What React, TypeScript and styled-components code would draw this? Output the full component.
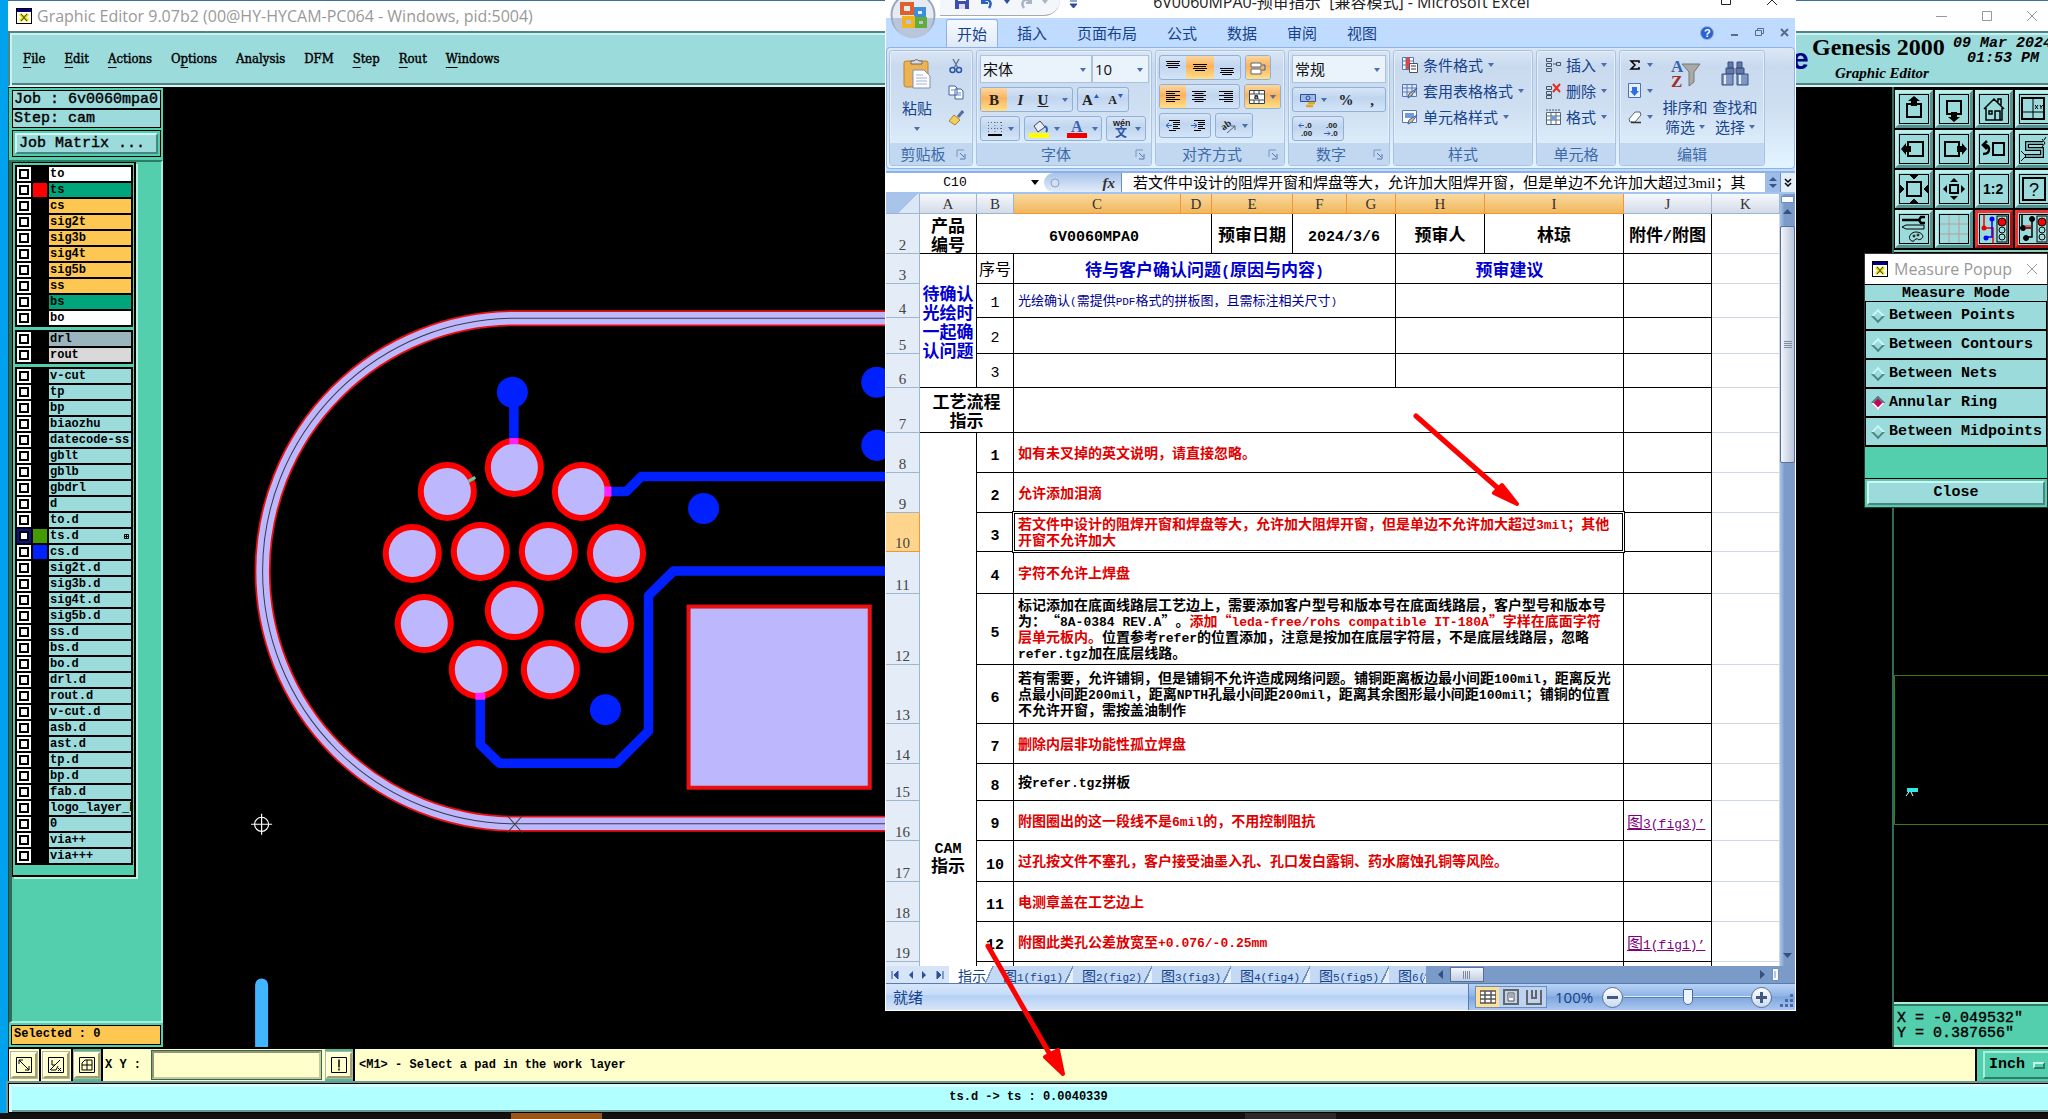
import React from "react";
import styled, { createGlobalStyle, css } from "styled-components";

const UI = `"Open Sans", "Noto Sans CJK SC", sans-serif`;
const MONO = `"Liberation Mono", "Noto Sans CJK SC", monospace`;
const SERIF = `"Liberation Serif", "Noto Sans CJK SC", serif`;
const CJK = `"Noto Sans CJK SC", sans-serif`;

const teal = "#9bdbdb";
const green = "#54cfae";
const cream = "#ffffcc";
const amber = "#fdc751";
const navy = "#15428b";

const Global = createGlobalStyle`
  *, *::before, *::after { box-sizing: border-box; }
  body { margin: 0; background: #00a2ed; overflow: hidden; }
  button, input, select { font: inherit; color: inherit; margin: 0; padding: 0; border: 0; background: none; border-radius: 0; }
  svg { display: block; flex: none; }
`;

const bevel = css`
  border: 2px solid;
  border-color: #d3f6f3 #4b8583 #4b8583 #d3f6f3;
`;

/* ---------- desktop and editor window ---------- */
const Desktop = styled.div`
  position: relative;
  min-height: 100vh;
  display: flex;
  flex-direction: column;
  overflow: hidden;
  background: #00a2ed;
  font-family: ${UI};
`;
const Editor = styled.section`
  flex: 1;
  margin-left: 8px;
  display: flex;
  flex-direction: column;
  background: #000;
  border-top: 1px solid #3a6ea0;
`;
const TitleBar = styled.header`
  height: 30px;
  display: flex;
  align-items: center;
  gap: 5px;
  padding: 0 10px 0 8px;
  background: #fff;
  color: #999;
  font-size: 16px;
  line-height: 20px;
`;
const WindowButtons = styled.div`
  margin-left: auto;
  display: flex;
  gap: 33px;
`;
const Plain = styled.button`
  display: flex;
  align-items: center;
  justify-content: center;
`;
const MenuBar = styled.nav`
  height: 56px;
  display: flex;
  background: ${teal};
  border: 2px solid;
  border-color: #4f8484 ${teal} #d3f6f3 #4f8484;
  border-right: 0;
  box-shadow: inset 2px 2px #c9f1f0, inset 0 -2px #4f7f80;
`;
const Menus = styled.div`
  display: flex;
  align-items: center;
  gap: 19px;
  padding: 0 0 0 13px;
`;
const MenuItem = styled.button`
  font: 13px/20px "DejaVu Serif Condensed", "DejaVu Serif", serif;
  -webkit-text-stroke: 0.4px #000;
  u { text-underline-offset: 4px; }
`;
const Brand = styled.div`
  margin-left: auto;
  display: grid;
  grid-template-columns: 20px 141px 95px;
  font-family: ${SERIF};
  font-weight: bold;
  white-space: nowrap;
`;
const BrandMark = styled.div`
  font: bold 30px/32px "Liberation Sans", sans-serif;
  color: #000080;
  padding-top: 10px;
`;
const BrandName = styled.div`
  font-size: 24px;
  line-height: 28px;
  small { display: block; font-size: 15px; line-height: 24px; font-style: italic; padding-left: 23px; }
`;
const Clock = styled.div`
  padding-top: 3px;
  font: italic bold 15px/15px ${MONO};
  span { display: block; padding-left: 14px; }
`;
const Work = styled.div`
  flex: 1;
  min-height: 0;
  display: flex;
`;

/* ---------- layer side bar ---------- */
const Side = styled.aside`
  width: 155px;
  display: flex;
  flex-direction: column;
  background: ${green};
  border-top: 1px solid #000;
  border-left: 1px solid #24483f;
  font-family: ${MONO};
`;
const JobInfo = styled.div`
  padding: 2px 2px 3px 3px;
  font-size: 15px;
  line-height: 17px;
  -webkit-text-stroke: 0.4px #000;
`;
const JobLine = styled.div`
  height: 19px;
  padding-left: 1px;
  border: 1px solid #000;
  background: ${teal};
  white-space: pre;
`;
const JobFrame = styled.div`
  margin-top: 2px;
  padding: 2px;
  border: 1px solid #000;
`;
const JobButton = styled.button`
  ${bevel}
  display: block;
  width: 100%;
  height: 21px;
  padding-left: 2px;
  text-align: left;
  background: ${teal};
  -webkit-text-stroke: 0.4px #000;
`;
const LayerPanel = styled.div`
  flex: 1;
  border-top: 2px solid #2f7c66;
  border-left: 3px solid #2f6b57;
  border-right: 2px solid #a9eedb;
  border-bottom: 2px solid #a9eedb;
`;
const LayerList = styled.div`
  width: 124px;
  height: 715px;
  display: flex;
  flex-direction: column;
  gap: 3px;
  padding: 2px;
  border: 1px solid #000;
  border-right-width: 2px;
  border-bottom-width: 2px;
  box-shadow: 2px 2px #b9f0e0;
`;
const LayerGroup = styled.div`
  display: grid;
  gap: 2px;
  width: 118px;
  padding: 2px;
  background: #000;
`;
const LayerRow = styled.label`
  height: 14px;
  display: grid;
  grid-template-columns: 14px 14px 82px;
  gap: 2px;
`;
const LayerTick = styled.input<{ $on?: boolean }>`
  appearance: none;
  width: 14px;
  height: 14px;
  padding: 2px;
  border: 2px solid ${(p) => (p.$on ? "#0a1090" : "#fff")};
  background: linear-gradient(#fff, #fff) content-box, #000;
`;
const Swatch = styled.span<{ $c: string }>`
  background: ${(p) => p.$c};
`;
const LayerName = styled.span<{ $c: string }>`
  display: flex;
  justify-content: space-between;
  align-items: center;
  padding: 0 2px 0 1px;
  background: ${(p) => p.$c};
  font-size: 12px;
  line-height: 14px;
  font-weight: bold;
  white-space: nowrap;
  overflow: hidden;
`;
const Selected = styled.div`
  margin: 2px;
  height: 20px;
  padding-left: 2px;
  border: 1px solid #000;
  background: ${amber};
  font-size: 12px;
  line-height: 17px;
  font-weight: bold;
`;
const Board = styled.main`
  flex: 1;
  min-width: 0;
  background: #000;
  overflow: hidden;
  svg { width: 100%; height: 100%; }
`;

/* ---------- right column ---------- */
const Right = styled.aside`
  width: 156px;
  display: flex;
  flex-direction: column;
  border-left: 2px solid #2f6b57;
  overflow: hidden;
`;
const ToolGrid = styled.div`
  display: grid;
  grid-template-columns: repeat(4, 38px);
  grid-auto-rows: 38px;
  gap: 2px;
  padding: 3px 0 2px 1px;
  border-bottom: 2px solid #8ecfc0;
`;
const Tool = styled.button<{ $alert?: boolean }>`
  display: flex;
  align-items: center;
  justify-content: center;
  border: 3px solid;
  border-color: ${(p) => (p.$alert ? "#e33 #a11 #a11 #e33" : "#bdeeec #56908f #56908f #bdeeec")};
  background: ${teal};
`;
const Overview = styled.div`
  flex: 1;
  min-height: 0;
  overflow: hidden;
`;
const Coords = styled.div`
  height: 45px;
  padding: 7px 0 0 3px;
  border: 2px solid;
  border-width: 2px 0;
  border-color: #a9eedb;
  box-shadow: inset 0 2px #2f7c66;
  background: ${green};
  font: 15px/15px ${MONO};
  -webkit-text-stroke: 0.4px #000;
  white-space: pre;
`;

/* ---------- prompt and status bars ---------- */
const Prompt = styled.div`
  height: 36px;
  display: flex;
  border: solid #000;
  border-width: 2px 0 2px 1px;
  background: ${cream};
  font: bold 12px/18px ${MONO};
`;
const PromptBox = styled.div<{ $green?: boolean }>`
  width: ${(p) => (p.$green ? 30 : 32)}px;
  display: flex;
  align-items: center;
  justify-content: center;
  background: ${(p) => (p.$green ? "#4dba9c" : cream)};
  border-right: 2px solid #000;
`;
const PromptButton = styled.button`
  width: 26px;
  height: 26px;
  display: flex;
  align-items: center;
  justify-content: center;
  background: ${cream};
  border: 2px solid;
  border-color: #fffff0 #a09c78 #a09c78 #fffff0;
  outline: 1px solid #b8b48c;
`;
const PromptLabel = styled.label`
  display: flex;
  align-items: center;
  padding: 0 9px 0 2px;
`;
const PromptField = styled.input`
  width: 169px;
  margin: 2px 4px 2px 2px;
  padding: 0 4px;
  border: 2px solid;
  border-color: #98946f #cbc79c #cbc79c #98946f;
  outline: 1px solid #30685a;
  background: ${cream};
`;
const PromptText = styled.div`
  flex: 1;
  display: flex;
  align-items: center;
  padding-left: 4px;
`;
const UnitBox = styled.div`
  width: 73px;
  padding: 2px 0 2px 6px;
  border-left: 2px solid #000;
  background: ${green};
  overflow: hidden;
`;
const UnitButton = styled.div`
  width: 90px;
  height: 28px;
  display: flex;
  align-items: center;
  gap: 6px;
  border: 2px solid;
  border-color: #a9eedb #2f7c66 #2f7c66 #a9eedb;
  padding-left: 4px;
  select { appearance: none; width: 38px; font: bold 15px/20px ${MONO}; }
`;
const UnitKnob = styled.span`
  width: 12px;
  height: 7px;
  border: 2px solid;
  border-color: #c4f5e8 #2f7c66 #2f7c66 #c4f5e8;
`;
const Status = styled.footer`
  height: 30px;
  display: flex;
  align-items: center;
  justify-content: center;
  padding-bottom: 2px;
  border: solid #000;
  border-width: 1px 0 1px 1px;
  outline: 2px solid #6b9999;
  background: #b2ffff;
  box-shadow: inset 3px 3px #d5ffff, inset 0 -2px #6b9999;
  font: bold 12px/18px ${MONO};
`;
const Taskbar = styled.div`
  height: 7px;
  display: flex;
  justify-content: flex-end;
  padding-right: 74px;
  background: linear-gradient(90deg, transparent 511px, #9c5517 511px, #9c5517 602px, transparent 602px, transparent 1245px, #2a2a2a 1245px, #2a2a2a 1336px, transparent 1336px), #111;
  color: #fff;
  font-size: 12px;
  line-height: 24px;
  overflow: hidden;
`;

/* ---------- measure popup ---------- */
const Popup = styled.section`
  position: absolute;
  right: 0;
  top: 253px;
  width: 184px;
  border: 1px solid #333;
  background: ${green};
  font: bold 15px/18px ${MONO};
`;
const PopupTitle = styled.header`
  height: 30px;
  display: flex;
  align-items: center;
  gap: 6px;
  padding: 0 9px 0 7px;
  background: #fff;
  color: #999;
  font: 16px/20px ${UI};
  button { margin-left: auto; }
`;
const Mode = styled.h2`
  height: 18px;
  margin: 0;
  border: solid #000;
  border-width: 1px 0;
  background: ${teal};
  font: inherit;
  line-height: 17px;
  text-align: center;
`;
const ModeList = styled.div`
  display: grid;
  gap: 2px;
  padding: 0 1px 2px 1px;
  background: #000;
`;
const ModeRow = styled.label`
  height: 27px;
  display: flex;
  align-items: center;
  gap: 6px;
  padding-left: 7px;
  background: ${teal};
  white-space: nowrap;
  input {
    appearance: none;
    width: 10px;
    height: 10px;
    transform: rotate(45deg);
    border: 2px solid;
    border-color: #c9f6f6 #4f8484 #4f8484 #c9f6f6;
  }
  input:checked { background: #cc0055; border-color: #4f8484 #e9ffff #e9ffff #4f8484; }
`;
const CloseFrame = styled.div`
  margin-top: 31px;
  padding: 2px;
  border: solid #000;
  border-width: 1px 0 0;
  button { ${bevel} width: 100%; height: 24px; background: ${teal}; }
`;

/* ---------- spreadsheet window ---------- */
const Sheet = styled.section`
  position: absolute;
  left: 885px;
  top: -14px;
  width: 911px;
  border: solid #fff;
  border-width: 0 1px 1px 1px;
  background: #bfdbff;
  color: ${navy};
  font-size: 15px;
  line-height: 20px;
`;
const SheetTitle = styled.header`
  height: 32px;
  display: flex;
  align-items: center;
  background: #fff;
  color: #222;
  white-space: nowrap;
`;
const Quick = styled.div`
  width: 120px;
  height: 30px;
  align-self: flex-start;
  margin-left: 54px;
  padding: 2px 16px 0 14px;
  display: flex;
  align-items: center;
  gap: 8px;
  background: #f3f6fb;
  border-bottom: 1px solid #aaa;
  border-radius: 0 0 16px 0;
`;
const SheetName = styled.h1`
  flex: 1;
  margin: 0;
  font: inherit;
  font-size: 16px;
  text-align: center;
  padding: 0 76px 0 0;
`;
const SheetButtons = styled.div`
  display: flex;
  gap: 36px;
  padding: 0 18px 4px 0;
`;
const Orb = styled.button`
  position: absolute;
  left: 4px;
  top: 6px;
`;
const Tabs = styled.nav`
  height: 29px;
  display: flex;
  align-items: flex-end;
  gap: 8px;
  padding: 0 6px 0 60px;
`;
const Tab = styled.button<{ $on?: boolean }>`
  height: 28px;
  padding: 0 11px;
  ${(p) => p.$on && css`
    background: linear-gradient(#f6faff, #dfeaf8);
    border: 1px solid #8db2e3;
    border-bottom: 0;
    padding: 0 10px;
    border-radius: 3px 3px 0 0;
  `}
`;
const TabTools = styled.div`
  margin-left: auto;
  align-self: center;
  display: flex;
  align-items: center;
  gap: 16px;
`;
const Ribbon = styled.div`
  height: 122px;
  display: flex;
  gap: 3px;
  padding: 2px 2px 2px 2px;
  border: 1px solid #8db2e3;
  border-radius: 4px;
  background: linear-gradient(#dde8f5 0, #c9daef 18px, #cfdff2 60px, #e3f4ff 118px);
`;
const Group = styled.section<{ $w: number }>`
  width: ${(p) => p.$w}px;
  height: 116px;
  display: flex;
  flex-direction: column;
  justify-content: space-between;
  border: 1px solid #a9c3e3;
  border-radius: 3px;
  box-shadow: inset 0 0 0 1px #e4effb;
  overflow: hidden;
`;
const GroupBody = styled.div`
  display: flex;
  flex-direction: column;
  gap: 4px;
  padding: 4px 3px 0;
`;
const GroupName = styled.div`
  height: 22px;
  display: flex;
  align-items: center;
  background: #c1d8f0;
  color: #3e6aaa;
  span { flex: 1; text-align: center; }
  svg { margin-right: 5px; }
`;
const Line = styled.div`
  display: flex;
  gap: 4px;
`;
const Cluster = styled.div`
  height: 25px;
  display: flex;
  border: 1px solid #8fb0d8;
  border-radius: 3px;
  background: linear-gradient(#d7e5f6, #c0d5ef 45%, #d5e5f8);
  overflow: hidden;
`;
const Cell = styled.button<{ $w?: number; $on?: boolean; $small?: boolean }>`
  width: ${(p) => p.$w ?? 26}px;
  display: flex;
  align-items: center;
  justify-content: center;
  gap: ${(p) => (p.$w === 25 ? 1 : 5)}px;
  font: bold ${(p) => (p.$small ? 12 : 15)}px/20px ${SERIF};
  color: #222;
  ${(p) => p.$on && css`background: linear-gradient(#fcd7a0, #fbb25c 45%, #ffe08a);`}
`;
const Combo = styled.div<{ $w: number }>`
  position: relative;
  width: ${(p) => p.$w}px;
  height: 28px;
  margin-right: -4px;
  border: 1px solid #abc1de;
  background: #eaf2fb;
  select { appearance: none; width: 100%; height: 26px; padding-left: 2px; color: #111; line-height: 20px; }
  svg { position: absolute; right: 5px; top: 12px; }
`;
const ClipBody = styled.div`
  display: grid;
  grid-template-columns: 54px 1fr;
  padding: 7px 4px 0 0;
`;
const BigButton = styled.button`
  display: flex;
  flex-direction: column;
  align-items: center;
  gap: 9px;
`;
const IconColumn = styled.div<{ $gap: number }>`
  display: flex;
  flex-direction: column;
  align-items: center;
  gap: ${(p) => p.$gap}px;
`;
const ListButton = styled.button`
  display: flex;
  align-items: center;
  gap: 5px;
  height: 22px;
  white-space: nowrap;
`;
const ListColumn = styled.div`
  display: flex;
  flex-direction: column;
  align-items: flex-start;
  gap: 4px;
  padding: 3px 0 0 8px;
`;
const EditBody = styled.div`
  display: grid;
  grid-template-columns: 40px 50px 50px;
`;
const EditButton = styled.button`
  display: flex;
  flex-direction: column;
  align-items: center;
  padding-top: 7px;
  span { display: flex; align-items: center; gap: 4px; white-space: nowrap; }
  svg + span { margin-top: 7px; }
`;

const FormulaBar = styled.div`
  height: 23px;
  display: flex;
  margin-top: 2px;
  border-top: 2px solid #8db2e3;
  border-bottom: 2px solid #a3c4ee;
  background: #fff;
  color: #000;
  font: 15px/19px ${CJK};
`;
const NameBox = styled.div`
  width: 158px;
  display: flex;
  align-items: center;
  input { width: 138px; text-align: center; font: 13px/18px ${MONO}; }
`;
const FxBox = styled.div`
  width: 78px;
  display: flex;
  align-items: center;
  justify-content: space-between;
  padding: 0 6px;
  border-right: 1px solid #6d8fc0;
  border-radius: 10px 0 0 10px;
  background: linear-gradient(#a9c4ea, #e2edfb);
  font: italic bold 15px/18px ${SERIF};
  color: #333;
`;
const Formula = styled.input`
  flex: 1;
  min-width: 0;
  padding-left: 11px;
  font: 15px/18px "Liberation Serif", "Noto Sans CJK SC", serif;
`;
const Spin = styled.div`
  width: 15px;
  display: flex;
  flex-direction: column;
  align-items: center;
  justify-content: center;
  gap: 3px;
  background: #9ebce8;
`;
const Expand = styled.button`
  width: 15px;
  display: flex;
  align-items: center;
  justify-content: center;
  background: #e4eefb;
  border-left: 1px solid #6d8fc0;
`;
const GridArea = styled.div`
  display: flex;
  height: 772px;
`;
const GridClip = styled.div`
  width: 894px;
  overflow: hidden;
  background: #fff;
`;
const Table = styled.table`
  width: 894px;
  table-layout: fixed;
  border-collapse: separate;
  border-spacing: 0;
  color: #000;
  text-spacing-trim: space-all;
  td, th { padding: 0; }
`;
const ColHead = styled.th<{ $on?: boolean }>`
  height: 20px;
  font: 15px/18px ${SERIF};
  color: #333;
  border-right: 1px solid ${(p) => (p.$on ? "#f29536" : "#9eb6ce")};
  border-bottom: 1px solid ${(p) => (p.$on ? "#f29536" : "#9eb6ce")};
  background: ${(p) => (p.$on ? "linear-gradient(#f9d99f, #f1b75b)" : "linear-gradient(#f6f9fc, #d3dbe9)")};
`;
const Corner = styled.th`
  background: linear-gradient(135deg, #a9c4e9 60%, #d9e7f7 60%);
  border-right: 1px solid #9eb6ce;
  border-bottom: 1px solid #9eb6ce;
`;
const RowHead = styled.th<{ $on?: boolean }>`
  vertical-align: bottom;
  font: 15px/16px ${SERIF};
  color: #444;
  background: ${(p) => (p.$on ? "#ffd58d" : "#e4ecf7")};
  border-right: 1px solid ${(p) => (p.$on ? "#f29536" : "#9eb6ce")};
  border-bottom: 1px solid ${(p) => (p.$on ? "#f29536" : "#9eb6ce")};
`;
type TdProps = { $kind?: "text" | "note" | "none"; $c?: string; $thin?: boolean; $picked?: boolean; $low?: boolean };
const Td = styled.td<TdProps>`
  color: ${(p) => p.$c ?? "#000"};
  border-right: 1px solid #000;
  border-bottom: 1px solid #000;
  text-align: center;
  font: bold 17px/19px ${CJK};
  ${(p) => p.$kind === "text" && css`padding: 0 0 2px 4px !important; text-align: left; font-size: 14px; line-height: 16px; white-space: nowrap;`}
  ${(p) => p.$kind === "note" && css`padding: 0 0 2px 4px !important; text-align: left; font-size: 13px; line-height: 16px;`}
  ${(p) => p.$kind === "none" && css`border-right-color: #d0d7e5; border-bottom-color: #d0d7e5;`}
  ${(p) => p.$thin && css`font-weight: normal; font-size: ${p.$kind === "note" ? 13 : 16}px;`}
  ${(p) => p.$low && css`vertical-align: bottom; padding-bottom: 92px !important;`}
  ${(p) => p.$picked && css`
    position: relative;
    &::after {
      content: "";
      position: absolute;
      inset: -2px;
      border: 1px solid #000;
      box-shadow: inset 0 0 0 1px #fff, inset 0 0 0 2px #000;
    }
  `}
`;
const Latin = styled.span<{ $s: number }>`
  font-family: ${MONO};
  font-size: ${(p) => p.$s}px;
  line-height: 0;
`;
const Red = styled.span`
  color: #e00000;
`;
const FigLink = styled.a`
  display: block;
  color: #800080;
  font: 16px/20px ${CJK};
  text-align: left;
  padding-left: 3px;
  text-decoration: underline;
  white-space: nowrap;
`;
const VScroll = styled.div`
  width: 15px;
  display: flex;
  flex-direction: column;
  align-items: center;
  background: linear-gradient(90deg, #a8c4ea, #7b9bc8 30%);
`;
const SplitMark = styled.div`
  width: 13px;
  height: 7px;
  margin: 2px 0 6px;
  border: 1px solid #6d8fc0;
  background: #fff;
`;
const VThumb = styled.div`
  width: 15px;
  height: 237px;
  margin: 12px 0 auto;
  display: flex;
  align-items: center;
  justify-content: center;
  border: 1px solid #5b6f96;
  border-radius: 2px;
  background: linear-gradient(90deg, #f3f6fb, #d3dcea 50%, #b9c6da);
`;
const TabStrip = styled.div`
  height: 17px;
  display: flex;
  background: #7a9ac8;
  font: 14px/16px ${CJK};
`;
const Nav = styled.div`
  width: 63px;
  display: flex;
  align-items: center;
  justify-content: space-around;
  background: #d5e4f7;
`;
const SheetTab = styled.button<{ $on?: boolean; $w: number }>`
  width: ${(p) => p.$w}px;
  text-align: left;
  padding-left: 9px;
  white-space: nowrap;
  overflow: hidden;
  background: ${(p) =>
    p.$on
      ? "linear-gradient(115deg, #fff 82%, #7e9cc8 82%, #7e9cc8 85%, #c4d9f3 85%)"
      : "linear-gradient(115deg, #c4d9f3 90%, #6f8fbf 90%, #6f8fbf 92%, #e6effa 92%)"};
`;
const HScroll = styled.div`
  flex: 1;
  display: flex;
  align-items: center;
  padding: 0 16px 0 12px;
  gap: 7px;
`;
const HThumb = styled.div`
  width: 34px;
  height: 15px;
  margin-right: auto;
  display: flex;
  align-items: center;
  justify-content: center;
  border: 1px solid #5b6f96;
  background: linear-gradient(#f3f6fb, #c3cfe2);
`;
const SheetStatus = styled.div`
  height: 27px;
  display: flex;
  align-items: center;
  border-top: 1px solid #567db0;
  background: linear-gradient(#d7e6f9, #c7dcf8 40%, #b3d0f5 45%, #d7e5f7);
`;
const Ready = styled.div`
  flex: 1;
  padding-left: 7px;
`;
const ZoomBox = styled.div`
  width: 327px;
  height: 26px;
  display: flex;
  align-items: center;
  padding: 0 1px 0 6px;
  border-left: 1px solid #567db0;
  background: linear-gradient(#b9d3f5, #8fb4e6 45%, #7fa6de 50%, #a9c7f0);
  label { display: flex; align-items: center; gap: 9px; padding-left: 8px; }
`;
const Views = styled.div`
  display: flex;
  width: 72px;
  border: 1px solid #6d8fc0;
`;
const View = styled.button<{ $on?: boolean }>`
  flex: 1;
  height: 20px;
  display: flex;
  align-items: center;
  justify-content: center;
  background: ${(p) => (p.$on ? "#ffdf94" : "#bcd3f2")};
`;
const Zoom = styled.input`
  appearance: none;
  width: 127px;
  height: 20px;
  background: linear-gradient(transparent 9px, #dfeaf8 9px, #dfeaf8 10px, #5a7fb5 10px, #5a7fb5 11px, transparent 11px);
  &::-webkit-slider-thumb {
    appearance: none;
    width: 10px;
    height: 16px;
    border: 1px solid #4b6a9b;
    border-radius: 1px 1px 5px 5px;
    background: #eef4fc;
  }
`;
const Round = styled.button`
  width: 21px;
  height: 21px;
  display: flex;
  align-items: center;
  justify-content: center;
  margin-right: -8px;
  border: 1px solid #5a7396;
  border-radius: 50%;
  background: linear-gradient(#fff, #c9daf2);
`;
const Grip = styled.span`
  margin: 8px 0 0 auto;
`;
const Arrows = styled.svg`
  position: absolute;
  left: 0;
  top: 0;
  pointer-events: none;
`;

/* ---------- small drawings ---------- */
const Ico = ({ w = 16, h = 16, children }: { w?: number; h?: number; children: React.ReactNode }) => (
  <svg width={w} height={h} viewBox={`0 0 ${w} ${h}`} fill="none" aria-hidden="true">{children}</svg>
);
const Down = ({ c = "#4b6fa8" }: { c?: string }) => <Ico w={6} h={4}><path d="M0 0h6L3 4z" fill={c} /></Ico>;
const XLogo = () => (
  <Ico w={16} h={16}>
    <rect x=".5" y=".5" width="15" height="15" fill="#fff" stroke="#000" />
    <rect x="1" y="1" width="14" height="3" fill="#000080" />
    <path d="M4 6l8 7M12 6l-8 7" stroke="#e6e600" strokeWidth="3" />
    <path d="M5 6l6 7M11 6l-6 7" stroke="#333" />
  </Ico>
);
const Launcher = () => (
  <Ico w={11} h={11}><path d="M1 8V1h7" stroke="#7a96c0" /><path d="M4 4l4 4M9 5v5H4" stroke="#5576ab" /></Ico>
);
const lines = (xs: number[][]) => <path d={xs.map(([x, y, l]) => `M${x} ${y}h${l}`).join("")} stroke="#000" strokeWidth="1" />;
const AlignV = ({ y }: { y: number }) => <Ico>{lines([[1, y + 0.5, 14], [2, y + 2.5, 12], [1, y + 4.5, 14], [3, y + 6.5, 10]])}</Ico>;
const AlignH = ({ k }: { k: number }) => (
  <Ico>{lines([0, 1, 2, 3, 4, 5].map((i) => { const l = i % 2 ? 9 : 14; return [1 + ((14 - l) * k) / 2, 2.5 + i * 2, l]; }))}</Ico>
);
const Indent = ({ out }: { out?: boolean }) => (
  <Ico>
    {lines([[4, 2.5, 11], [8, 4.5, 7], [8, 6.5, 7], [8, 8.5, 5], [8, 10.5, 7], [4, 12.5, 7]])}
    <path d={out ? "M7 7.500H1M4 5L1 7.500l3 2.500" : "M1 7.500h6M4 5l3 2.500-3 2.500"} stroke="#2b5fc0" />
  </Ico>
);

const toolDrawings: React.ReactNode[] = [
  <g key="0"><path d="M8 10h14v13H8z" strokeWidth="2" /><path d="M15 2l6 5h-3v5h-6V7H9z" fill="#000" stroke="none" /></g>,
  <g key="1"><path d="M8 7h14v13H8z" strokeWidth="2" /><path d="M15 28l6-5h-3v-5h-6v5H9z" fill="#000" stroke="none" /></g>,
  <g key="2"><path d="M5 15L15 5l10 10M7 14v12h16V14M16 26v-9h5v9M10 17h3v3h-3zM19 8V5h3v6" strokeWidth="1.500" /></g>,
  <g key="3"><path d="M3 4h22v21H3z" strokeWidth="2" /><path d="M14 4v21M3 18h22M16 11l3 4M19 11l-3 4M21 11l1 2 2-2M22 13v2" /></g>,
  <g key="4"><path d="M9 8h15v14H9z" strokeWidth="2" /><path d="M2 15l5-6v3h5v6H7v3z" fill="#000" stroke="none" /></g>,
  <g key="5"><path d="M6 8h14v14H6z" strokeWidth="2" /><path d="M28 15l-5-6v3h-5v6h5v3z" fill="#000" stroke="none" /></g>,
  <g key="6"><path d="M14 9h11v12H14z" strokeWidth="2" /><path d="M4 20c5 0 6-2 6-5s-2-4-5-4M8 7l-4 4 4 4" strokeWidth="2.500" /></g>,
  <g key="7"><path d="M24 9H8v6h15v7H6" strokeWidth="4" /><path d="M24 9H8v6h15v7H6" stroke={teal} strokeWidth="1.500" /><path d="M23 5l3 4-3 4M27 3l-2 3M2 17l5 5-5 5" /></g>,
  <g key="8"><path d="M8 8h14v14H8z" strokeWidth="2" /><path d="M15 5l-4-4h8zM15 25l-4 4h8zM5 15l-4-4v8zM25 15l4-4v8z" fill="#000" /></g>,
  <g key="9"><path d="M11 11h8v8h-8z" strokeWidth="2" /><path d="M15 4l-4 4h8zM15 26l-4-4h8zM4 15l4-4v8zM26 15l-4-4v8z" fill="#000" stroke="none" /></g>,
  <text key="10" x="4" y="20" fontSize="14" fontWeight="bold" fill="#000" stroke="none" fontFamily="Liberation Sans">1:2</text>,
  <g key="11"><path d="M4 4h22v22H4z" strokeWidth="2" /><text x="10" y="22" fontSize="18" fill="#000" stroke="none" fontFamily="Liberation Sans">?</text></g>,
  <g key="12"><path d="M3 6h17M26 3h-4l-2 3 2 3h4" strokeWidth="2.500" /><path d="M3 13l4-2h18v4H7z" /><path d="M13 27c-5-2-2-9 4-9s9 5 5 7-2-1-5 0-1 3-4 2z" /><circle cx="15" cy="22" r="1" /><circle cx="19" cy="21" r="1" /></g>,
  <path key="13" d="M10 1v28M20 1v28M1 10h28M1 20h28" stroke="#c09a9a" />,
  <g key="14"><path d="M5 1v13h9v15" stroke="#e00" strokeWidth="1.500" /><path d="M13 5v18H7" stroke="#00f" strokeWidth="1.500" /><circle cx="13" cy="5" r="2.500" fill="#00f" stroke="none" /><circle cx="7" cy="24" r="2.500" fill="#00f" stroke="none" /><circle cx="5" cy="14" r="2.500" fill="#e00" stroke="none" /><rect x="18" y="2" width="10" height="26" /><circle cx="23" cy="8" r="4" fill="#f00" /><circle cx="23" cy="16" r="3" /><circle cx="23" cy="23" r="3" /></g>,
  <g key="15"><path d="M3 1v13h9M13 5v18H7" strokeWidth="1.500" /><circle cx="13" cy="5" r="2.500" fill="#000" /><circle cx="7" cy="24" r="2.500" fill="#000" /><circle cx="4" cy="14" r="2.500" fill="#000" /><path d="M7 11v4M9 11v4M11 11v4" stroke="#e00" /><rect x="18" y="2" width="10" height="26" /><circle cx="23" cy="8" r="4" fill="#f00" /><circle cx="23" cy="16" r="3" /><circle cx="23" cy="23" r="3" /></g>,
];

/* ---------- data ---------- */
const stack: [string, string, string?][] = [
  ["to", "#fff"], ["ts", "#00a57c", "#f00"], ["cs", amber], ["sig2t", amber], ["sig3b", amber],
  ["sig4t", amber], ["sig5b", amber], ["ss", amber], ["bs", "#00a57c"], ["bo", "#fff"],
];
const drills: [string, string, string?][] = [["drl", "#9bb5bf"], ["rout", "#d9d9d9"]];
const misc: [string, string, string?][] = (
  "v-cut tp bp biaozhu datecode-ss gblt gblb gbdrl d to.d ts.d cs.d sig2t.d sig3b.d sig4t.d sig5b.d ss.d bs.d bo.d drl.d rout.d v-cut.d asb.d ast.d tp.d bp.d fab.d logo_layer_b 0 via++ via+++"
).split(" ").map((n) => [n, teal, n === "ts.d" ? "#439a05" : n === "cs.d" ? "#0022ff" : undefined]);

const menus: [string, string, string][] = [
  ["", "F", "ile"], ["", "E", "dit"], ["", "A", "ctions"], ["O", "p", "tions"], ["Analysis", "", ""],
  ["DFM", "", ""], ["", "S", "tep"], ["", "R", "out"], ["", "W", "indows"],
];
const pads = [
  [514, 467], [447, 491], [581, 491], [412, 553], [480, 551], [548, 551],
  [616, 553], [424, 623], [514, 610], [604, 623], [478, 669], [550, 669],
];
const vias = [[512, 392], [703, 508], [605, 709], [876, 382], [876, 445]];
const modes = ["Between Points", "Between Contours", "Between Nets", "Annular Ring", "Between Midpoints"];
const columns: [string, number][] = [
  ["A", 57], ["B", 37], ["C", 167], ["D", 31], ["E", 81], ["F", 54], ["G", 49], ["H", 89], ["I", 139], ["J", 88], ["K", 68],
];

const Mixed = ({ text, s }: { text: string; s: number }) => (
  <>{text.split(/([\x20-\x7e’]+)/).map((t, i) => (i % 2 ? <Latin $s={s} key={i}>{t}</Latin> : t))}</>
);
const M = ({ t }: { t: string }) => <Mixed text={t} s={13} />;

type Note = { row: number; h: number; red?: boolean; body: React.ReactNode; fig?: string };
const notes: Note[] = [
  { row: 8, h: 40, red: true, body: "如有未叉掉的英文说明，请直接忽略。" },
  { row: 9, h: 40, red: true, body: "允许添加泪滴" },
  { row: 10, h: 39, red: true, body: <><M t="若文件中设计的阻焊开窗和焊盘等大，允许加大阻焊开窗，但是单边不允许加大超过3mil；其他" /><br />开窗不允许加大</> },
  { row: 11, h: 42, red: true, body: "字符不允许上焊盘" },
  {
    row: 12, h: 71, body: <>
      标记添加在底面线路层工艺边上，需要添加客户型号和版本号在底面线路层，客户型号和版本号<br />
      <M t="为：“8A-0384 REV.A”。" /><Red><M t="添加“leda-free/rohs compatible IT-180A”字样在底面字符" /><br />层单元板内。</Red>
      <M t="位置参考refer的位置添加，注意是按加在底层字符层，不是底层线路层，忽略" /><br />
      <M t="refer.tgz加在底层线路。" />
    </>,
  },
  {
    row: 13, h: 59, body: <>
      <M t="若有需要，允许铺铜，但是铺铜不允许造成网络问题。铺铜距离板边最小间距100mil，距离反光" /><br />
      <M t="点最小间距200mil，距离NPTH孔最小间距200mil，距离其余图形最小间距100mil；铺铜的位置" /><br />
      不允许开窗，需按盖油制作
    </>,
  },
  { row: 14, h: 40, red: true, body: "删除内层非功能性孤立焊盘" },
  { row: 15, h: 37, body: <M t="按refer.tgz拼板" /> },
  { row: 16, h: 40, red: true, body: <M t="附图圈出的这一段线不是6mil的，不用控制阻抗" />, fig: "图3(fig3)’" },
  { row: 17, h: 41, red: true, body: "过孔按文件不塞孔，客户接受油墨入孔、孔口发白露铜、药水腐蚀孔铜等风险。" },
  { row: 18, h: 40, red: true, body: "电测章盖在工艺边上" },
  { row: 19, h: 40, red: true, body: <M t="附图此类孔公差放宽至+0.076/-0.25mm" />, fig: "图1(fig1)’" },
];

const Layers = ({ rows }: { rows: [string, string, string?][] }) => (
  <LayerGroup>
    {rows.map(([name, color, chip]) => (
      <LayerRow key={name}>
        <LayerTick type="checkbox" $on={name === "ts.d"} defaultChecked={name === "ts.d"} />
        <Swatch $c={chip ?? "#000"} />
        <LayerName $c={color}>
          {name}
          {name === "ts.d" && <Ico w={5} h={5}><path d="M.5.5h4v4h-4zM2.500 0v5M0 2.500h5" stroke="#000" /></Ico>}
        </LayerName>
      </LayerRow>
    ))}
  </LayerGroup>
);

const BoardView = () => (
  <Board>
    <svg viewBox="163 87 1729 959" preserveAspectRatio="xMinYMin slice" fill="none">
      <path d="M1000 318H515a252.500 252.500 0 0 0 0 505H1000" stroke="#e81010" strokeWidth="16" />
      <path d="M1000 318H515a252.500 252.500 0 0 0 0 505H1000" stroke="#bdb8fd" strokeWidth="12.500" />
      <path d="M1000 318H515a252.500 252.500 0 0 0 0 505H1000" stroke="#3a3a4a" />
      <g stroke="#0020ff" strokeWidth="9.500" strokeLinejoin="round">
        <path d="M513.500 392v50M604 491h22l15-15h260M480 696v48l19 18.500h117l32-32V595l25-24.500h230" />
      </g>
      {vias.map(([x, y]) => <circle key={x + "-" + y} cx={x} cy={y} r="15.500" fill="#0020ff" />)}
      {pads.map(([x, y]) => <circle key={x + "-" + y} cx={x} cy={y} r="26.500" fill="#bdb8fd" stroke="#f00" strokeWidth="6" />)}
      <path d="M509 438h9v6h-9zM604 486h7v10h-7zM475 692h10v7h-10z" fill="#ff20ff" />
      <path d="M468 481l7-4" stroke="#5fd0b0" strokeWidth="3" />
      <rect x="688" y="606" width="181" height="181" fill="#bdb8fd" stroke="#e81010" strokeWidth="4" />
      <path d="M507 815l15 17M522 815l-15 17" stroke="#3a3a3a" />
      <g stroke="#fff" strokeWidth="1.200"><circle cx="261.500" cy="823.500" r="7" /><path d="M251 823.500h21M261.500 813v21" /></g>
      <path d="M255 1046v-62a6.500 6.500 0 0 1 13 0v62z" fill="#41b5ff" />
    </svg>
  </Board>
);

const SheetRibbon = () => (
  <Ribbon>
    <Group $w={84}>
      <ClipBody>
        <BigButton>
          <Ico w={28} h={31}>
            <rect x="1" y="3" width="24" height="26" rx="2" fill="#e9b356" stroke="#b98531" />
            <path d="M8 6V3h3a3 3 0 0 1 5 0h3v3z" fill="#ddd" stroke="#667" />
            <path d="M10 12h11l6 6v12H10z" fill="#fff" stroke="#7d8fb0" /><path d="M13 17h7M13 20h11M13 23h11M13 26h11" stroke="#9fb2d4" />
          </Ico>
          <span>粘贴</span>
          <Down />
        </BigButton>
        <IconColumn $gap={10}>
          <Plain aria-label="Cut"><Ico><path d="M5 1l5 9M11 1L6 10" stroke="#667a99" strokeWidth="1.500" /><circle cx="4.500" cy="12" r="2.500" stroke="#2b55a8" strokeWidth="1.500" /><circle cx="11" cy="12" r="2.500" stroke="#2b55a8" strokeWidth="1.500" /></Ico></Plain>
          <Plain aria-label="Copy"><Ico><path d="M1 2h6l2 2v7H1zM7 5h6l2 2v8H7z" fill="#fff" stroke="#3b62a8" /><path d="M9 9h4M9 11h4M3 6h3" stroke="#6a8cc8" /></Ico></Plain>
          <Plain aria-label="Format painter"><Ico><path d="M15 1l-5 6" stroke="#5a6fa0" strokeWidth="3" /><path d="M6 5l6 5-5 5-6-4z" fill="#f3cf62" stroke="#a98427" /></Ico></Plain>
        </IconColumn>
      </ClipBody>
      <GroupName><span>剪贴板</span><Launcher /></GroupName>
    </Group>

    <Group $w={176}>
      <GroupBody>
        <Line>
          <Combo $w={112}><select aria-label="Font"><option>宋体</option></select><Down /></Combo>
          <Combo $w={57}><select aria-label="Font size"><option>10</option></select><Down /></Combo>
        </Line>
        <Line>
          <Cluster><Cell $on>B</Cell><Cell $w={27}><i>I</i></Cell><Cell $w={38}><u>U</u><Ico w={4} h={4}>{null}</Ico><Down /></Cell></Cluster>
          <Cluster><Cell $w={25}>A<Ico w={5} h={12}><path d="M0 4l2.500-4L5 4z" fill="#2b5fc0" /></Ico></Cell><Cell $w={25} $small>A<Ico w={5} h={12}><path d="M0 0h5L2.500 4z" fill="#2b5fc0" /></Ico></Cell></Cluster>
        </Line>
        <Line>
          <Cluster><Cell $w={38}><Ico><path d="M1.500 1v12M14.500 1v12M8 1v12M1 1.500h14M1 7.500h14" stroke="#667" strokeDasharray="1 2" /><path d="M1 14h14" stroke="#000" strokeWidth="2" /></Ico><Down /></Cell></Cluster>
          <Cluster>
            <Cell $w={38}><Ico w={20} h={18}><path d="M5 6l6-5 5 6-7 5z" fill="#e8eef8" stroke="#445" /><path d="M16 6c3 2 2 5 1 6" stroke="#2b5fc0" strokeWidth="2" /><path d="M0 13h20v5H0z" fill="#ff0" /></Ico><Down /></Cell>
            <Cell $w={38}><Ico w={20} h={18}><text x="4" y="12" fontSize="16" fontWeight="bold" fill="#3a62b0" fontFamily="Liberation Serif">A</text><path d="M0 13h20v5H0z" fill="#e00" /></Ico><Down /></Cell>
          </Cluster>
          <Cluster><Cell $w={38}><Ico w={18} h={20}><text x="1" y="7" fontSize="9" fontWeight="bold" fill="#222" fontFamily="Liberation Sans">wén</text><text x="3" y="18" fontSize="12" fill="#2b55a8" fontFamily="Noto Sans CJK SC">文</text></Ico><Down /></Cell></Cluster>
        </Line>
      </GroupBody>
      <GroupName><span>字体</span><Launcher /></GroupName>
    </Group>

    <Group $w={130}>
      <GroupBody>
        <Line>
          <Cluster><Cell><AlignV y={1} /></Cell><Cell $on $w={28}><AlignV y={4} /></Cell><Cell><AlignV y={8} /></Cell></Cluster>
          <Cluster><Cell $on $w={24}><Ico><path d="M1 3h10v4H1zM1 9h10v5H1z" fill="#fff" stroke="#567" /><path d="M12 5h3v5h-3" stroke="#2b5fc0" /></Ico></Cell></Cluster>
        </Line>
        <Line>
          <Cluster><Cell $on><AlignH k={0} /></Cell><Cell $w={28}><AlignH k={1} /></Cell><Cell><AlignH k={2} /></Cell></Cluster>
          <Cluster><Cell $on $w={36}><Ico><path d="M.5 1.500h15v13H.5zM.5 5h15M.5 11h15M5 1v4M10 1v4M5 11v4M10 11v4" fill="#fff" stroke="#345" /><text x="5" y="10" fontSize="8" fontWeight="bold" fill="#000" fontFamily="Liberation Sans">a</text></Ico><Down /></Cell></Cluster>
        </Line>
        <Line>
          <Cluster><Cell $w={25}><Indent out /></Cell><Cell $w={25}><Indent /></Cell></Cluster>
          <Cluster><Cell $w={36}><Ico><text x="1" y="10" fontSize="10" fill="#222" transform="rotate(-35 6 9)" fontFamily="Liberation Serif" fontWeight="bold">ab</text><path d="M6 15l8-7M14 8v4M14 8h-4" stroke="#567" /></Ico><Down /></Cell></Cluster>
        </Line>
      </GroupBody>
      <GroupName><span>对齐方式</span><Launcher /></GroupName>
    </Group>

    <Group $w={102}>
      <GroupBody>
        <Line><Combo $w={94}><select aria-label="Number format"><option>常规</option></select><Down /></Combo></Line>
        <Line>
          <Cluster>
            <Cell $w={40}><Ico><path d="M.5 2.500h15v7H.5z" fill="#9fb8e4" stroke="#2b4f98" /><circle cx="8" cy="6" r="2" stroke="#2b4f98" /><path d="M8 11h7M6 14h7" stroke="#e0a820" strokeWidth="2.500" /></Ico><Down /></Cell>
            <Cell>%</Cell><Cell>,</Cell>
          </Cluster>
        </Line>
        <Line>
          <Cluster>
            <Cell $w={25}><Ico><text x="7" y="7" fontSize="8" fontWeight="bold" fill="#222" fontFamily="Liberation Sans">.0</text><text x="3" y="15" fontSize="8" fontWeight="bold" fill="#222" fontFamily="Liberation Sans">.00</text><path d="M6 4.500H1M3 2.500l-2 2 2 2" stroke="#2b5fc0" /></Ico></Cell>
            <Cell $w={25}><Ico><text x="3" y="7" fontSize="8" fontWeight="bold" fill="#222" fontFamily="Liberation Sans">.00</text><text x="8" y="15" fontSize="8" fontWeight="bold" fill="#222" fontFamily="Liberation Sans">.0</text><path d="M1 12.500h6M5 10.500l2 2-2 2" stroke="#2b5fc0" /></Ico></Cell>
          </Cluster>
        </Line>
      </GroupBody>
      <GroupName><span>数字</span><Launcher /></GroupName>
    </Group>

    <Group $w={140}>
      <ListColumn>
        <ListButton><Ico><path d="M.5.5h11v12H.5zM.5 4h11M.5 8h11M4 .5v12" fill="#fff" stroke="#5878b0" /><path d="M4 1h4v11H4z" fill="#d44" /><path d="M7.500 6.500h8v9h-8z" fill="#fff" stroke="#456" /><path d="M9 9h5M9 12h5" stroke="#333" /></Ico>条件格式<Down /></ListButton>
        <ListButton><Ico><path d="M.5 1.500h14v12H.5zM.5 5h14M.5 9h14M5 1.500v12M10 1.500v12" fill="#dfe9fa" stroke="#5878b0" /><path d="M15 5l-6 8-3 2 1-4z" fill="#f0c050" stroke="#2b5fc0" /></Ico>套用表格格式<Down /></ListButton>
        <ListButton><Ico><path d="M.5 1.500h14v12H.5z" fill="#fff" stroke="#5878b0" /><path d="M3 4h9v5H3z" fill="#6f9ae0" /><path d="M15 6l-5 7-4 2 1-4z" fill="#f0c050" stroke="#2b5fc0" /></Ico>单元格样式<Down /></ListButton>
      </ListColumn>
      <GroupName><span>样式</span></GroupName>
    </Group>

    <Group $w={80}>
      <ListColumn>
        <ListButton><Ico><path d="M1.500 1.500h5v3h-5zM1.500 6.500h5v3h-5zM1.500 11.500h5v3h-5zM11.500 5.500h4v3h-4zM8 7h3" stroke="#456" /></Ico>插入<Down /></ListButton>
        <ListButton><Ico><path d="M1.500 3.500h5v3h-5zM1.500 8.500h5v3h-5zM1.500 12.500h5v3h-5z" stroke="#456" /><path d="M8 1l7 8M15 1L8 9" stroke="#e03020" strokeWidth="2" /></Ico>删除<Down /></ListButton>
        <ListButton><Ico><path d="M1.500 3.500h14v12h-14zM1.500 7h14M1.500 11h14M6 3.500v12M11 3.500v12" stroke="#567" fill="#fff" /><path d="M6 7h5v4H6z" fill="#6f9ae0" /><path d="M1 1h14" stroke="#456" strokeDasharray="2 1" /></Ico>格式<Down /></ListButton>
      </ListColumn>
      <GroupName><span>单元格</span></GroupName>
    </Group>

    <Group $w={146}>
      <EditBody>
        <ListColumn>
          <ListButton aria-label="Sum"><Ico w={14} h={16}><path d="M11 6V4H3l4 4-4 4h8v-2" stroke="#000" strokeWidth="1.500" /></Ico><Down /></ListButton>
          <ListButton aria-label="Fill"><Ico w={14} h={16}><path d="M.5.5h12v14H.5z" fill="#e8f0fc" stroke="#4a72b8" /><path d="M4 4h5v4h2l-4.500 5L2 8h2z" fill="#2b6fe0" /></Ico><Down /></ListButton>
          <ListButton aria-label="Clear"><Ico w={14} h={16}><path d="M1 10l6-7h5l1 3-6 7H2z" fill="#fff" stroke="#567" /><path d="M3 13.500h10" stroke="#333" strokeWidth="1.500" /></Ico><Down /></ListButton>
        </ListColumn>
        <EditButton>
          <Ico w={32} h={32}>
            <text x="2" y="14" fontSize="17" fontWeight="bold" fill="#3a62b0" fontFamily="Liberation Serif">A</text><text x="2" y="29" fontSize="17" fontWeight="bold" fill="#a03028" fontFamily="Liberation Serif">Z</text>
            <path d="M13 6h18l-6 8v10l-5 4V14z" fill="#a9a9a9" stroke="#777" />
          </Ico>
          <span>排序和</span><span>筛选<Down /></span>
        </EditButton>
        <EditButton>
          <Ico w={32} h={32}>
            <path d="M9 4h5v6H9zM18 4h5v6h-5zM7 10h8v6H7zM17 10h8v6h-8z" fill="#5f79a8" stroke="#3a4f7c" />
            <path d="M3 16h11v11H3zM18 16h11v11H18z" fill="#7e97c4" stroke="#3a4f7c" /><path d="M6 17v9M21 17v9" stroke="#e4ecf8" strokeWidth="2" />
          </Ico>
          <span>查找和</span><span>选择<Down /></span>
        </EditButton>
      </EditBody>
      <GroupName><span>编辑</span></GroupName>
    </Group>
  </Ribbon>
);

const Worksheet = () => (
  <Table>
    <colgroup><col style={{ width: 34 }} />{columns.map(([n, w]) => <col key={n} style={{ width: w }} />)}</colgroup>
    <thead>
      <tr><Corner />{columns.map(([n]) => <ColHead key={n} $on={n >= "C" && n <= "I"}>{n}</ColHead>)}</tr>
    </thead>
    <tbody>
      <tr style={{ height: 40 }}>
        <RowHead>2</RowHead><Td>产品<br />编号</Td>
        <Td colSpan={3}><Mixed text="6V0060MPA0" s={15} /></Td><Td>预审日期</Td>
        <Td colSpan={2}><Mixed text="2024/3/6" s={15} /></Td><Td>预审人</Td><Td>林琼</Td><Td><Mixed text="附件/附图" s={15} /></Td><Td $kind="none" />
      </tr>
      <tr style={{ height: 30 }}>
        <RowHead>3</RowHead><Td rowSpan={4} $c="#0000d0">待确认<br />光绘时<br />一起确<br />认问题</Td><Td $thin>序号</Td>
        <Td colSpan={5} $c="#0000d0"><Mixed text="待与客户确认问题(原因与内容)" s={15} /></Td><Td colSpan={2} $c="#0000d0">预审建议</Td><Td /><Td $kind="none" />
      </tr>
      {[34, 36, 34].map((h, i) => (
        <tr key={i} style={{ height: h }}>
          <RowHead>{i + 4}</RowHead><Td $thin><Latin $s={15}>{i + 1}</Latin></Td>
          <Td colSpan={5} $kind="note" $thin $c="#000090">{i === 0 && <Mixed text="光绘确认(需提供PDF格式的拼板图，且需标注相关尺寸)" s={11} />}</Td>
          <Td colSpan={2} /><Td /><Td $kind="none" />
        </tr>
      ))}
      <tr style={{ height: 45 }}>
        <RowHead>7</RowHead><Td colSpan={2}>工艺流程<br />指示</Td><Td colSpan={7} /><Td /><Td $kind="none" />
      </tr>
      {notes.map((n, i) => (
        <tr key={n.row} style={{ height: n.h }}>
          <RowHead $on={n.row === 10}>{n.row}</RowHead>
          {i === 0 && <Td rowSpan={13} $low><Latin $s={15}>CAM</Latin><br />指示</Td>}
          <Td><Latin $s={15}>{i + 1}</Latin></Td>
          <Td colSpan={7} $kind="text" $c={n.red ? "#e00000" : "#000"} $picked={n.row === 10}>{n.body}</Td>
          <Td $thin>{n.fig && <FigLink href="#"><Mixed text={n.fig} s={13} /></FigLink>}</Td><Td $kind="none" />
        </tr>
      ))}
      <tr style={{ height: 5 }}><RowHead /><Td /><Td colSpan={7} /><Td /><Td $kind="none" /></tr>
    </tbody>
  </Table>
);

const Excel = () => (
  <Sheet>
    <SheetTitle>
      <Quick>
        <Ico><path d="M1 1h14v14H1z" fill="#3c4fb0" /><path d="M4 2h8v5H4z" fill="#fff" /><path d="M5 10h6v5H5z" fill="#dde" /></Ico>
        <Ico w={18} h={16}><path d="M4 3v6h6" stroke="#2b5fc0" strokeWidth="2" /><path d="M5 8c5-5 10 0 6 6" stroke="#2b5fc0" strokeWidth="2.500" /></Ico>
        <Down c="#2b4f98" />
        <Ico w={16} h={16}><path d="M13 3v6H8" stroke="#aab4c4" strokeWidth="2" /><path d="M12 8C7 3 2 8 6 14" stroke="#aab4c4" strokeWidth="2.500" /></Ico>
        <Down c="#aab4c4" />
      </Quick>
      <Ico w={24} h={14}><path d="M10 6h7M10 9h7l-3.500 4z" stroke="#2b4f98" fill="#2b4f98" /></Ico>
      <SheetName>6V0060MPA0-预审指示&nbsp; [兼容模式] - Microsoft Excel</SheetName>
      <SheetButtons>
        <Plain aria-label="Minimise"><Ico w={10} h={10}>{null}</Ico></Plain>
        <Plain aria-label="Maximise"><Ico w={10} h={10}><path d="M.5.5h9v9h-9z" stroke="#222" /></Ico></Plain>
        <Plain aria-label="Close"><Ico w={10} h={10}><path d="M0 0l10 10M10 0L0 10" stroke="#222" /></Ico></Plain>
      </SheetButtons>
    </SheetTitle>
    <Orb aria-label="Office">
      <Ico w={46} h={46}>
        <circle cx="23" cy="23" r="21.500" fill="#e6ebf3" stroke="#9aa7bd" strokeWidth="2" />
        <path d="M3 26a20 20 0 0 0 40 0z" fill="#b9c5d8" />
        <g strokeWidth="4" fill="none">
          <path d="M12 12h10v9H12z" stroke="#e0602a" /><path d="M26 17h8v7h-8z" stroke="#3f8fd8" />
          <path d="M14 26h9v8h-9z" stroke="#f2b320" /><path d="M27 27h8v7h-8z" stroke="#5fae3a" />
        </g>
      </Ico>
    </Orb>
    <Tabs>
      {["开始", "插入", "页面布局", "公式", "数据", "审阅", "视图"].map((t, i) => <Tab key={t} $on={i === 0}>{t}</Tab>)}
      <TabTools>
        <Plain aria-label="Help"><Ico w={14} h={14}><circle cx="7" cy="7" r="6.500" fill="#2b62d0" stroke="#8fb0e8" /><text x="4" y="11" fontSize="11" fontWeight="bold" fill="#fff" fontFamily="Liberation Sans">?</text></Ico></Plain>
        <Plain aria-label="Minimise workbook"><Ico w={9} h={9}><path d="M1 7h7" stroke="#5a6c88" strokeWidth="2" /></Ico></Plain>
        <Plain aria-label="Restore workbook"><Ico w={9} h={9}><path d="M.5 2.500h6v5h-6zM2.500 2V.5h6v5H7" stroke="#5a6c88" /></Ico></Plain>
        <Plain aria-label="Close workbook"><Ico w={9} h={9}><path d="M1 1l7 7M8 1L1 8" stroke="#5a6c88" strokeWidth="2" /></Ico></Plain>
      </TabTools>
    </Tabs>
    <SheetRibbon />
    <FormulaBar>
      <NameBox><input aria-label="Name box" defaultValue="C10" /><Ico w={22} h={5}><path d="M7 0h8l-4 5z" fill="#000" /></Ico></NameBox>
      <FxBox><Ico w={10} h={10}><circle cx="5" cy="5" r="4" fill="#d5e0ef" stroke="#8ba6cc" /></Ico><span>fx</span></FxBox>
      <Formula aria-label="Formula" defaultValue="若文件中设计的阻焊开窗和焊盘等大，允许加大阻焊开窗，但是单边不允许加大超过3mil；其" />
      <Spin><Ico w={8} h={4}><path d="M0 4h8L4 0z" fill="#35558c" /></Ico><Ico w={8} h={4}><path d="M0 0h8L4 4z" fill="#35558c" /></Ico></Spin>
      <Expand aria-label="Expand formula bar"><Ico w={8} h={10}><path d="M1 1l3 3 3-3M1 5l3 3 3-3" stroke="#000" strokeWidth="1.500" /></Ico></Expand>
    </FormulaBar>
    <GridArea>
      <GridClip><Worksheet /></GridClip>
      <VScroll>
        <SplitMark />
        <Ico w={9} h={5}><path d="M0 5h9L4.500 0z" fill="#35507f" /></Ico>
        <VThumb><Ico w={8} h={8}><path d="M0 .5h8M0 2.500h8M0 4.500h8M0 6.500h8" stroke="#7d8aa2" /></Ico></VThumb>
        <Ico w={9} h={13}><path d="M0 0h9L4.500 5z" fill="#35507f" /></Ico>
      </VScroll>
    </GridArea>
    <TabStrip>
      <Nav>
        <Ico w={8} h={8}><path d="M1 0v8M7 0L3 4l4 4z" stroke="#2b4f98" fill="#2b4f98" /></Ico>
        <Ico w={5} h={8}><path d="M5 0L1 4l4 4z" fill="#2b4f98" /></Ico>
        <Ico w={5} h={8}><path d="M0 0l4 4-4 4z" fill="#2b4f98" /></Ico>
        <Ico w={8} h={8}><path d="M7 0v8M1 0l4 4-4 4z" stroke="#2b4f98" fill="#2b4f98" /></Ico>
      </Nav>
      <SheetTab $on $w={45}>指示</SheetTab>
      {[1, 2, 3, 4, 5].map((n) => <SheetTab key={n} $w={79}><Mixed text={`图${n}(fig${n})`} s={11} /></SheetTab>)}
      <SheetTab $w={37}><Mixed text="图6(" s={11} /></SheetTab>
      <HScroll>
        <Ico w={5} h={9}><path d="M5 0v9L0 4.500z" fill="#35507f" /></Ico>
        <HThumb><Ico w={8} h={8}><path d="M.5 0v8M2.500 0v8M4.500 0v8M6.500 0v8" stroke="#7d8aa2" /></Ico></HThumb>
        <Ico w={5} h={9}><path d="M0 0v9l5-4.500z" fill="#35507f" /></Ico>
        <Ico w={7} h={13}><path d="M.5.5h6v12h-6z" fill="#fff" stroke="#6d8fc0" /><path d="M3 3v7" stroke="#6d8fc0" /></Ico>
      </HScroll>
    </TabStrip>
    <SheetStatus>
      <Ready>就绪</Ready>
      <ZoomBox>
        <Views>
          <View $on aria-label="Normal"><Ico><path d="M0 2h16v12H0zM0 6h16M0 10h16M5 2v12M11 2v12" stroke="#555" strokeWidth="1.500" fill="#fff" /></Ico></View>
          <View aria-label="Page layout"><Ico><path d="M1 1h14v14H1z" stroke="#666" strokeWidth="2" /><path d="M5 4h6v8H5zM6 6h4M6 8h4" stroke="#555" fill="#fff" /></Ico></View>
          <View aria-label="Page break preview"><Ico><path d="M1 1v14h14V1M6 1v8h4V1" stroke="#666" strokeWidth="2" /></Ico></View>
        </Views>
        <label>100%
          <Round as="span"><Ico w={11} h={3}><path d="M0 1.500h11" stroke="#445a7c" strokeWidth="3" /></Ico></Round>
          <Zoom type="range" defaultValue={50} />
        </label>
        <Round aria-label="Zoom in"><Ico w={11} h={11}><path d="M0 5.500h11M5.500 0v11" stroke="#445a7c" strokeWidth="3" /></Ico></Round>
        <Grip><Ico w={14} h={14}><path d="M10 0h3v3h-3zM5 5h3v3H5zM10 5h3v3h-3zM0 10h3v3H0zM5 10h3v3H5zM10 10h3v3h-3z" fill="#4a6ba5" /></Ico></Grip>
      </ZoomBox>
    </SheetStatus>
  </Sheet>
);

export default function App() {
  return (
    <Desktop>
      <Global />
      <Editor>
        <TitleBar>
          <XLogo />
          <span>Graphic Editor 9.07b2 (00@HY-HYCAM-PC064 - Windows, pid:5004)</span>
          <WindowButtons>
            <Plain aria-label="Minimise"><Ico w={12} h={12}><path d="M0 6.500h11" stroke="#999" /></Ico></Plain>
            <Plain aria-label="Maximise"><Ico w={12} h={12}><path d="M1.500 1.500h9v9h-9z" stroke="#999" /></Ico></Plain>
            <Plain aria-label="Close"><Ico w={12} h={12}><path d="M1 1l10 10M11 1L1 11" stroke="#999" /></Ico></Plain>
          </WindowButtons>
        </TitleBar>
        <MenuBar>
          <Menus>{menus.map(([a, u, b]) => <MenuItem key={a + u + b}>{a}{u && <u>{u}</u>}{b}</MenuItem>)}</Menus>
          <Brand>
            <BrandMark>e</BrandMark>
            <BrandName>Genesis 2000<small>Graphic Editor</small></BrandName>
            <Clock>09 Mar 2024<span>01:53 PM</span></Clock>
          </Brand>
        </MenuBar>
        <Work>
          <Side>
            <JobInfo>
              <JobLine>Job : 6v0060mpa0</JobLine>
              <JobLine>Step: cam</JobLine>
              <JobFrame><JobButton>Job Matrix ...</JobButton></JobFrame>
            </JobInfo>
            <LayerPanel>
              <LayerList><Layers rows={stack} /><Layers rows={drills} /><Layers rows={misc} /></LayerList>
            </LayerPanel>
            <Selected>Selected : 0</Selected>
          </Side>
          <BoardView />
          <Right>
            <ToolGrid>
              {toolDrawings.map((d, i) => (
                <Tool key={i} $alert={i > 13} aria-label={`Tool ${i + 1}`}>
                  <Ico w={30} h={30}><g stroke="#000"><rect x=".5" y=".5" width="29" height="29" />{d}</g></Ico>
                </Tool>
              ))}
            </ToolGrid>
            <Overview>
              <Ico w={154} h={750}>
                <path d="M154 423.500H.5v149H154" stroke="#3f7d14" />
                <path d="M13 536h11v4H13z" fill="#30e8e8" /><path d="M15 540l-3 4M17 540l2 4" stroke="#d0ffff" />
              </Ico>
            </Overview>
            <Coords>{`X = -0.049532"\nY = 0.387656"`}</Coords>
          </Right>
        </Work>
        <Prompt>
          <PromptBox><PromptButton aria-label="Snap line"><Ico><path d="M.5.5h15v15H.5zM3 3l10 10M3 7V3h4M9 13h4V9" stroke="#000" /></Ico></PromptButton></PromptBox>
          <PromptBox><PromptButton aria-label="Snap angle"><Ico><path d="M.5.5h15v15H.5zM2 13L12 3M4 3v5h3M3 13h5l2-4M10 11l3 3M13 11l-3 3" stroke="#000" /></Ico></PromptButton></PromptBox>
          <PromptBox $green><PromptButton aria-label="Snap grid"><Ico><path d="M.5.5h15v15H.5zM3 6l3-3h7v10H3zM3 8h10M8 3v10" stroke="#000" /></Ico></PromptButton></PromptBox>
          <PromptLabel htmlFor="xy">X Y :</PromptLabel>
          <PromptField id="xy" />
          <PromptBox $green><PromptButton aria-label="Alert"><Ico><path d="M.5.5h15v15H.5z" stroke="#000" /><path d="M8 2.500v8M8 11.500v2" stroke="#000" strokeWidth="1.500" /></Ico></PromptButton></PromptBox>
          <PromptText>&lt;M1&gt; - Select a pad in the work layer</PromptText>
          <UnitBox><UnitButton><select aria-label="Units"><option>Inch</option></select><UnitKnob /></UnitButton></UnitBox>
        </Prompt>
        <Status>ts.d -&gt; ts : 0.0040339</Status>
      </Editor>
      <Taskbar>14:25</Taskbar>
      <Popup>
        <PopupTitle><XLogo />Measure Popup<Plain aria-label="Close popup"><Ico w={12} h={12}><path d="M1 1l10 10M11 1L1 11" stroke="#999" /></Ico></Plain></PopupTitle>
        <Mode>Measure Mode</Mode>
        <ModeList>
          {modes.map((m) => <ModeRow key={m}><input type="radio" name="mode" defaultChecked={m === "Annular Ring"} />{m}</ModeRow>)}
        </ModeList>
        <CloseFrame><button>Close</button></CloseFrame>
      </Popup>
      <Excel />
      <Arrows width="1600" height="1119" viewBox="0 0 1600 1119" aria-hidden="true">
        <g stroke="#f00" fill="#f00" strokeLinejoin="round" strokeLinecap="round">
          <path d="M1416 416l84 74M988 946l64 112" strokeWidth="5" />
          <path d="M1517 504l-15-19-8 8zM1063 1074l-5-24-13 7z" strokeWidth="4" />
        </g>
      </Arrows>
    </Desktop>
  );
}
